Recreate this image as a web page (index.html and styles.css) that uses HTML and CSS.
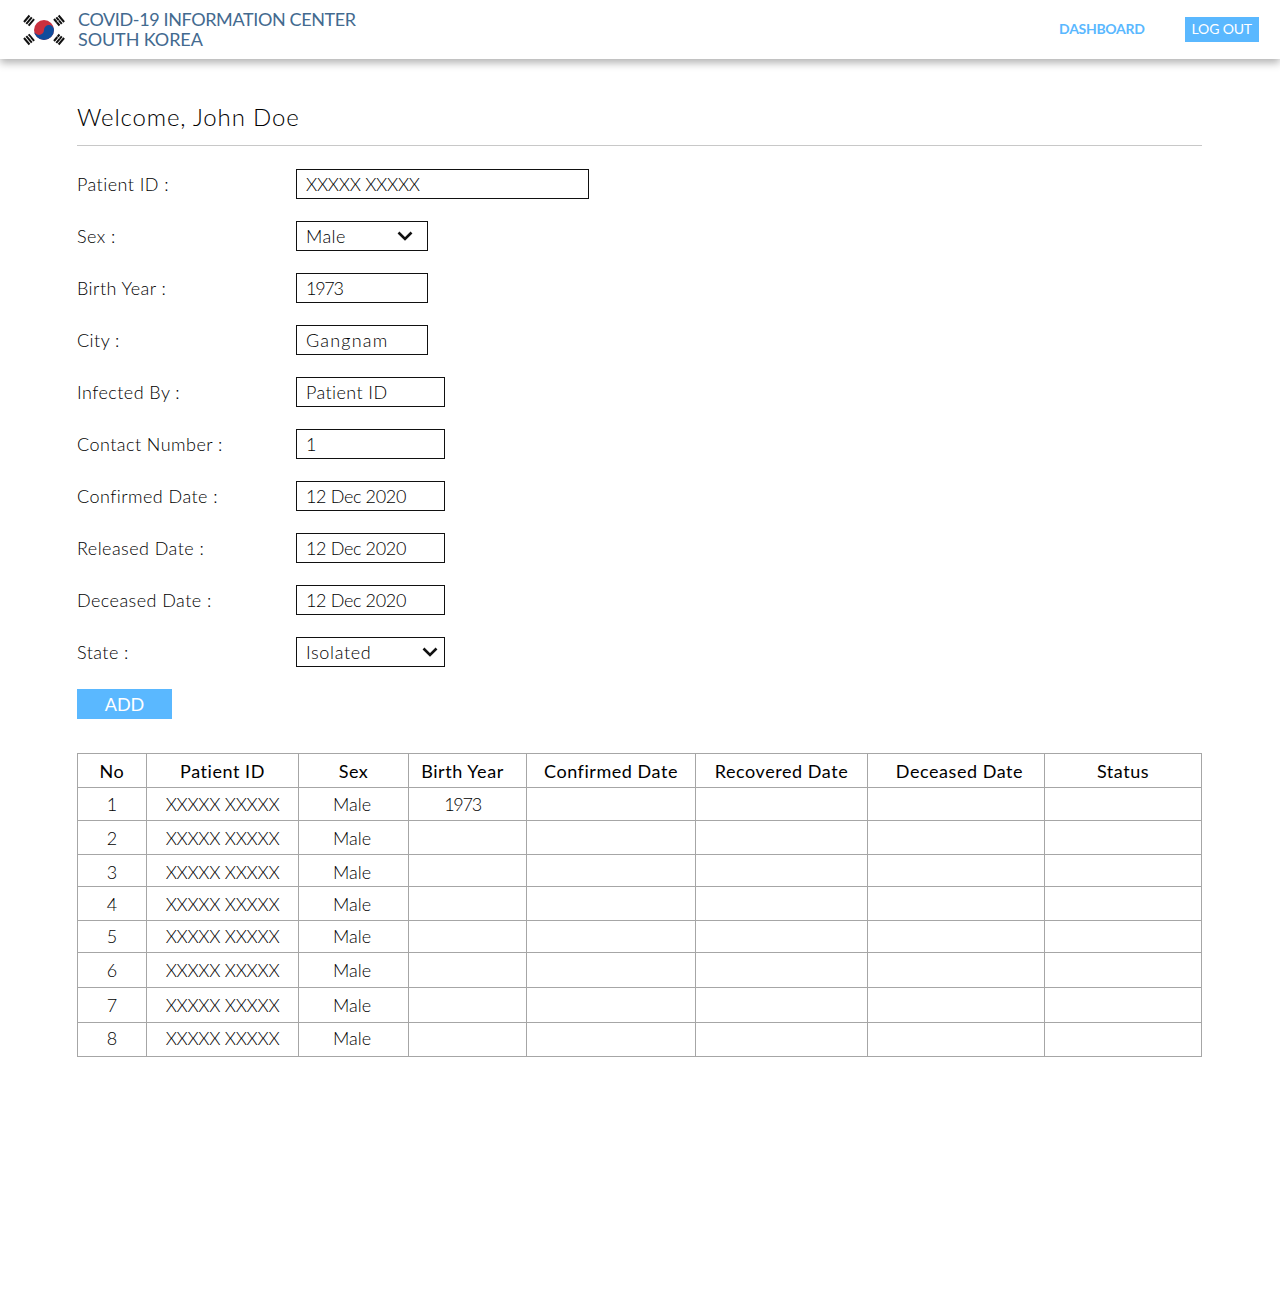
FILE: index.html
```html
<!DOCTYPE html>
<html lang="en">
<head>
    <meta charset="UTF-8">
    <meta name="viewport" content="width=device-width, initial-scale=1.0">
    <title>Covid-19 Information Center</title>
    <link rel="stylesheet" href="styles.css">
</head>
<body>

<nav>
    <div class="brand">
        <svg class="flag" width="44" height="34" viewBox="0 0 44 34">
            <circle cx="21" cy="17" r="10" fill="#c9303e"/>
            <path d="M11 17a10 10 0 0 0 20 0a5 5 0 0 0-10 0a5 5 0 0 1-10 0z" fill="#0f4c9c"/>
            <g stroke="#111" stroke-width="2">
                <path d="M1 9l5.500-6.500M3.300 10.800l5.500-6.500M5.600 12.600l5.500-6.500"/>
                <path d="M31 6l5.500 6.500M33.300 4.300l5.500 6.500M35.600 2.500l5.500 6.500"/>
                <path d="M1 25l5.500 6.500M3.300 23.200l5.500 6.500M5.600 21.400l5.500 6.500"/>
                <path d="M31 28l5.500-6.500M33.300 29.800l5.500-6.500M35.600 31.500l5.500-6.500"/>
            </g>
            <path d="M33.800 9.200l2.800-2.300M33.200 22.800l3.200 2.700M5.100 22.900l2.800 2.500" stroke="#fff" stroke-width="0.600"/>
        </svg>
        <div class="brand-name">COVID-19 INFORMATION CENTER<br><span class="country">SOUTH KOREA</span></div>
    </div>
    <ul>
        <li><a href="#">DASHBOARD</a></li>
        <li><a href="#" class="logout">LOG OUT</a></li>
    </ul>
</nav>

<div class="main-content">
    <h1>Welcome, John Doe</h1>

    <form>
        <div class="row"><label>Patient ID :</label><div class="field wide ids">XXXXX XXXXX</div></div>
        <div class="row"><label>Sex :</label><div class="field small">Male
            <svg class="chevron" width="16" height="10" viewBox="0 0 16 10"><path d="M1.500 1.500L8 8l6.500-6.500" fill="none" stroke="#111" stroke-width="2.600"/></svg></div></div>
        <div class="row"><label>Birth Year :</label><div class="field small year">1973</div></div>
        <div class="row"><label>City :</label><div class="field small city">Gangnam</div></div>
        <div class="row"><label>Infected By :</label><div class="field">Patient ID</div></div>
        <div class="row"><label>Contact Number :</label><div class="field">1</div></div>
        <div class="row"><label>Confirmed Date :</label><div class="field date">12 Dec 2020</div></div>
        <div class="row"><label>Released Date :</label><div class="field date">12 Dec 2020</div></div>
        <div class="row"><label>Deceased Date :</label><div class="field date">12 Dec 2020</div></div>
        <div class="row"><label>State :</label><div class="field state">Isolated
            <svg class="chevron" width="16" height="10" viewBox="0 0 16 10"><path d="M1.500 1.500L8 8l6.500-6.500" fill="none" stroke="#111" stroke-width="2.600"/></svg></div></div>
        <button type="button">ADD</button>
    </form>

    <table>
        <colgroup>
            <col class="c-no"><col class="c-id"><col class="c-sex"><col class="c-year">
            <col class="c-conf"><col class="c-rec"><col class="c-dec"><col class="c-status">
        </colgroup>
        <thead>
            <tr><th>No</th><th>Patient ID</th><th>Sex</th><th class="year-head">Birth Year</th><th>Confirmed Date</th><th>Recovered Date</th><th class="deceased-head">Deceased Date</th><th>Status</th></tr>
        </thead>
        <tbody>
            <tr class="h33"><td>1</td><td class="ids">XXXXX XXXXX</td><td class="sex">Male</td><td class="year">1973</td><td></td><td></td><td></td><td></td></tr>
            <tr class="h34"><td>2</td><td class="ids">XXXXX XXXXX</td><td class="sex">Male</td><td></td><td></td><td></td><td></td><td></td></tr>
            <tr class="h32 low"><td>3</td><td class="ids">XXXXX XXXXX</td><td class="sex">Male</td><td></td><td></td><td></td><td></td><td></td></tr>
            <tr class="h34"><td>4</td><td class="ids">XXXXX XXXXX</td><td class="sex">Male</td><td></td><td></td><td></td><td></td><td></td></tr>
            <tr class="h32 high"><td>5</td><td class="ids">XXXXX XXXXX</td><td class="sex">Male</td><td></td><td></td><td></td><td></td><td></td></tr>
            <tr class="h35"><td>6</td><td class="ids">XXXXX XXXXX</td><td class="sex">Male</td><td></td><td></td><td></td><td></td><td></td></tr>
            <tr class="h35"><td>7</td><td class="ids">XXXXX XXXXX</td><td class="sex">Male</td><td></td><td></td><td></td><td></td><td></td></tr>
            <tr class="h34 higher"><td>8</td><td class="ids">XXXXX XXXXX</td><td class="sex">Male</td><td></td><td></td><td></td><td></td><td></td></tr>
        </tbody>
    </table>
</div>

</body>
</html>
```

FILE: styles.css
```css
* {
    margin: 0;
    padding: 0;
    box-sizing: border-box;
}

body {
    font-family: 'Lato', sans-serif;
    font-weight: 300;
    background-color: white;
    color: #000;
    min-height: 1311px;
}

/* Navbar styling */
nav {
    height: 59px;
    padding: 0 21px 0 23px;
    display: flex;
    justify-content: space-between;
    align-items: center;
    background-color: white;
    box-shadow: 0px 4px 8px rgba(0, 0, 0, 0.3);
}

.brand {
    display: flex;
    align-items: center;
    gap: 11px;
}

.brand-name {
    color: #436a8f;
    font-size: 18px;
    font-weight: 400;
    line-height: 20px;
    letter-spacing: -0.38px;
    padding-bottom: 2px;
}

.brand-name .country {
    letter-spacing: -0.1px;
}

nav ul {
    list-style-type: none;
    display: flex;
    align-items: center;
    gap: 40px;
}

nav ul li a {
    display: block;
    color: #5ab8ff;
    text-decoration: none;
    font-size: 14px;
    font-weight: 700;
    letter-spacing: -0.3px;
    padding-bottom: 3px;
}

nav ul li a.logout {
    padding: 0 7px 1px;
    line-height: 24px;
    color: white;
    font-weight: 400;
    letter-spacing: -0.15px;
    background-color: #5ab8ff;
}

.main-content {
    padding: 43px 78px 0 77px;
}

h1 {
    font-size: 24px;
    font-weight: 300;
    line-height: 30px;
    letter-spacing: 0.85px;
    padding-bottom: 13px;
    border-bottom: 1px solid #c8c8c8;
}

form {
    padding-top: 23px;
}

.row {
    display: flex;
    align-items: center;
    height: 30px;
    margin-bottom: 22px;
}

.row label {
    width: 219px;
    font-size: 18px;
    letter-spacing: 0.45px;
}

.field {
    display: flex;
    align-items: center;
    justify-content: space-between;
    width: 149px;
    height: 30px;
    padding: 0 14px 0 9px;
    border: 1px solid #111;
    font-size: 18px;
    letter-spacing: 0.4px;
}

.field.wide {
    width: 293px;
}

.field.small {
    width: 132px;
}

.field.state {
    padding-right: 6px;
    letter-spacing: 0.65px;
}

.field.city {
    letter-spacing: 1.2px;
}

.field.date {
    letter-spacing: -0.35px;
}

form button {
    display: block;
    width: 95px;
    height: 30px;
    font-family: inherit;
    font-size: 18px;
    font-weight: 400;
    color: white;
    background-color: #5ab8ff;
    border: none;
}

table {
    width: 1125px;
    margin-top: 34px;
    table-layout: fixed;
    border-collapse: collapse;
    font-size: 18px;
}

.c-no { width: 69px; }
.c-id { width: 152px; }
.c-sex { width: 110px; }
.c-year { width: 118px; }
.c-conf { width: 169px; }
.c-rec { width: 172px; }
.c-dec { width: 177px; }
.c-status { width: 157px; }

th, td {
    border: 1px solid #a6a6a6;
    text-align: center;
    font-weight: 300;
    padding: 0;
}

th {
    height: 34px;
    font-weight: 400;
    letter-spacing: 0.55px;
}

th.year-head {
    padding-right: 10px;
}

th.deceased-head {
    padding-left: 7px;
}

.ids, .field.ids {
    letter-spacing: -0.3px;
}

.sex {
    padding-right: 3px;
}

.year, .field.year {
    letter-spacing: -1.3px;
}

td.year {
    padding-right: 10px;
}

.h32 td { height: 32px; }
.h33 td { height: 33px; }
.h34 td { height: 34px; }
.h35 td { height: 35px; }

/* text sits a little off centre in some rows */
.low td { padding-top: 2px; }
.high td { padding-bottom: 2px; }
.higher td { padding-bottom: 4px; }
```
